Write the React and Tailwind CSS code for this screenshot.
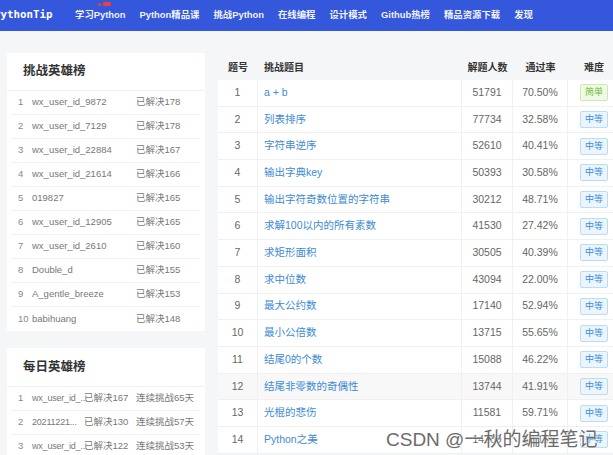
import React from 'react';

const nav = ['学习Python', 'Python精品课', '挑战Python', '在线编程', '设计模式', 'Github热榜', '精品资源下载', '发现'];

const heroes = [
  ['1', 'wx_user_id_9872', '已解决178'],
  ['2', 'wx_user_id_7129', '已解决178'],
  ['3', 'wx_user_id_22884', '已解决167'],
  ['4', 'wx_user_id_21614', '已解决166'],
  ['5', '019827', '已解决165'],
  ['6', 'wx_user_id_12905', '已解决165'],
  ['7', 'wx_user_id_2610', '已解决160'],
  ['8', 'Double_d', '已解决155'],
  ['9', 'A_gentle_breeze', '已解决153'],
  ['10', 'babihuang', '已解决148'],
];

const daily = [
  ['1', 'wx_user_id_...', '已解决167', '连续挑战65天'],
  ['2', '20211221...', '已解决130', '连续挑战57天'],
  ['3', 'wx_user_id_...', '已解决122', '连续挑战53天'],
];

const problems = [
  [1, 'a + b', 51791, '70.50%', '简单'],
  [2, '列表排序', 77734, '32.58%', '中等'],
  [3, '字符串逆序', 52610, '40.41%', '中等'],
  [4, '输出字典key', 50393, '30.58%', '中等'],
  [5, '输出字符奇数位置的字符串', 30212, '48.71%', '中等'],
  [6, '求解100以内的所有素数', 41530, '27.42%', '中等'],
  [7, '求矩形面积', 30505, '40.39%', '中等'],
  [8, '求中位数', 43094, '22.00%', '中等'],
  [9, '最大公约数', 17140, '52.94%', '中等'],
  [10, '最小公倍数', 13715, '55.65%', '中等'],
  [11, '结尾0的个数', 15088, '46.22%', '中等'],
  [12, '结尾非零数的奇偶性', 13744, '41.91%', '中等'],
  [13, '光棍的悲伤', 11581, '59.71%', '中等'],
  [14, 'Python之美', 14209, '52.11%', '中等'],
];

function Badge({ level }) {
  if (level === '简单') {
    return (
      <span className="inline-block px-[4px] leading-[15px] text-[9px] rounded-[2px] border border-[#cfe9b3] bg-[#f0f9e6] text-[#6fba32]">
        {level}
      </span>
    );
  }
  return (
    <span className="inline-block px-[4px] leading-[15px] text-[9px] rounded-[2px] border border-[#bcdcf5] bg-[#eaf5fd] text-[#3b8fdc]">
      {level}
    </span>
  );
}

export default function App() {
  return (
    <div
      className="relative w-[613px] h-[455px] overflow-hidden bg-[#f5f6f7] text-[#333]"
      style={{ fontFamily: '"Liberation Sans", "Noto Sans CJK SC", sans-serif' }}
    >
      <header className="h-[31px] bg-[#3457dc] flex items-center">
        <div
          className="ml-[-6px] w-[81px] shrink-0 text-white font-bold text-[10.8px]"
          style={{ fontFamily: '"DejaVu Sans Mono", monospace' }}
        >
          PythonTip
        </div>
        <nav className="flex items-center gap-[14px] text-white/95 text-[9.4px] font-semibold">
          {nav.map((n, i) => (
            <span key={n} className="relative whitespace-nowrap">
              {n}
              {i === 0 && (
                <span className="absolute left-[23px] top-[-6px] flex items-center gap-[2px]">
                  <span className="w-[3px] h-[3px] rounded-full bg-[#e8413a]" />
                  <span className="w-[8px] h-[4px] rounded-[1px] bg-[#e8413a]" />
                </span>
              )}
            </span>
          ))}
        </nav>
      </header>

      <div className="flex gap-[13px] pl-[7px]">
        <aside className="w-[198px] shrink-0 flex flex-col gap-[17px] pt-[22px]">
          <section className="bg-white rounded-[2px]">
            <h2 className="h-[38px] flex items-center pl-[16px] text-[12.5px] font-bold text-[#333] border-b border-[#f0f0f0]">
              挑战英雄榜
            </h2>
            {heroes.map((h, i) => (
              <div
                key={h[0]}
                className={`h-[24px] flex items-center text-[9.5px] text-[#777] mx-[4px] ${i < heroes.length - 1 ? 'border-b border-[#f1f1f1]' : ''}`}
              >
                <span className="w-[21px] pl-[7px] text-[#888]">{h[0]}</span>
                <span className="w-[104px]">{h[1]}</span>
                <span>{h[2]}</span>
              </div>
            ))}
          </section>
          <section className="bg-white rounded-[2px]">
            <h2 className="h-[39px] flex items-center pl-[16px] text-[12.5px] font-bold text-[#333] border-b border-[#f0f0f0]">
              每日英雄榜
            </h2>
            {daily.map((d) => (
              <div key={d[0]} className="h-[24px] flex items-center text-[9.5px] text-[#777] mx-[4px] border-b border-[#f1f1f1] whitespace-nowrap">
                <span className="w-[21px] pl-[7px] text-[#888]">{d[0]}</span>
                <span className="w-[52px] text-[9px] tracking-[-0.2px]">{d[1]}</span>
                <span className="w-[52px]">{d[2]}</span>
                <span>{d[3]}</span>
              </div>
            ))}
          </section>
        </aside>

        <main className="w-[410px] shrink-0 pt-[23px]">
          <div className="h-[26px] flex items-center text-[10px] font-bold text-[#333]">
            <span className="w-[40px] text-center">题号</span>
            <span className="w-[204px] pl-[6px]">挑战题目</span>
            <span className="w-[51px] text-center">解题人数</span>
            <span className="w-[55px] text-center">通过率</span>
            <span className="w-[50px] text-center pl-[2px]">难度</span>
          </div>
          <div className="bg-white">
            {problems.map((p) => (
              <div
                key={p[0]}
                className={`h-[26.7px] flex items-center text-[10.5px] border-b border-[#f0f0f0] ${p[0] === 12 ? 'bg-[#f8f8f9]' : ''}`}
              >
                <span className="w-[40px] h-full flex items-center justify-center text-[#666] border-r border-[#f0f0f0]">{p[0]}</span>
                <span className="w-[204px] h-full flex items-center pl-[6px] text-[#3d8ad4] border-r border-[#f0f0f0]">{p[1]}</span>
                <span className="w-[51px] h-full flex items-center justify-center text-[#666] border-r border-[#f0f0f0]">{p[2]}</span>
                <span className="w-[55px] h-full flex items-center justify-center text-[#666] border-r border-[#f0f0f0]">{p[3]}</span>
                <span className="w-[50px] h-full flex items-center justify-center pl-[2px]">
                  <Badge level={p[4]} />
                </span>
              </div>
            ))}
          </div>
        </main>
      </div>

      <div
        className="absolute left-[386px] top-[426px] text-[19px] text-[#6b6b6b] whitespace-nowrap"
        style={{ textShadow: '0 0 2px #fff, 0 0 2px #fff' }}
      >
        CSDN @一秋的编程笔记
      </div>
    </div>
  );
}
